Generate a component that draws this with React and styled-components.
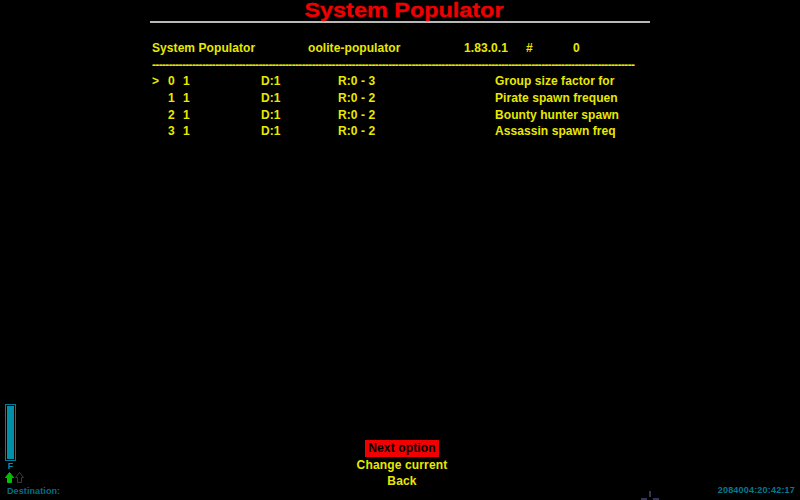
import React from "react";
import styled, { createGlobalStyle } from "styled-components";

const Global = createGlobalStyle`
  html, body { margin: 0; padding: 0; background: #000; }
  #root { width: 800px; height: 500px; }
`;

const Screen = styled.div`
  width: 800px;
  height: 500px;
  background: #000;
  overflow: hidden;
  display: flex;
  flex-direction: column;
  font-family: "Liberation Sans", Arial, sans-serif;
  font-weight: 700;
  color: #e8e800;
`;

const Panel = styled.main`
  width: 500px;
  margin-left: 150px;
  flex: 1;
`;

const Title = styled.h1`
  margin: 0;
  padding-left: 8px;
  height: 21px;
  line-height: 20px;
  font-size: 21px;
  font-weight: 700;
  -webkit-text-stroke: 0.3px #f00000;
  color: #f00000;
  text-align: center;
  transform: scaleX(1.115);
  transform-origin: 254px 0;
`;

const Rule = styled.div`
  height: 2px;
  background: #b8b8b8;
`;

const Table = styled.div`
  margin-top: 17px;
  padding-left: 2px;
  font-size: 12px;
  line-height: 16.7px;
  letter-spacing: 0.07px;
`;

const HeaderRow = styled.div`
  display: grid;
  grid-template-columns: 156px 156px 62px 47px 1fr;
`;

const Divider = styled.div`
  height: 17px;
  white-space: nowrap;
  letter-spacing: -0.67px;
`;

const Rows = styled.div`
  margin-top: -0.5px;
`;

const Row = styled.div`
  display: grid;
  grid-template-columns: 16px 15px 78px 77px 157px 1fr;
  white-space: nowrap;
`;

const Footer = styled.footer`
  height: 96px;
  display: grid;
  grid-template-columns: 150px 500px 150px;
`;

const LeftHud = styled.div`
  display: flex;
  flex-direction: column;
  padding-left: 5px;
`;

const FuelFrame = styled.div`
  width: 7px;
  height: 53px;
  border: 1px solid #007f94;
  padding: 1px;
  display: flex;
`;

const FuelFill = styled.div`
  flex: 1;
  background: #0090a8;
`;

const FuelLabel = styled.div`
  width: 11px;
  height: 11px;
  font-size: 9px;
  line-height: 11px;
  text-align: center;
  color: #0090a8;
`;

const Arrows = styled.div`
  display: flex;
  gap: 1px;
  height: 12px;
`;

const Caption = styled.div`
  font-size: 9px;
  line-height: 10px;
  margin-top: 2px;
  padding-left: 2px;
  letter-spacing: 0.1px;
  color: #006f88;
  white-space: nowrap;
`;

const Menu = styled.nav`
  display: flex;
  flex-direction: column;
  align-items: center;
  padding-top: 36px;
  padding-left: 4px;
  font-size: 12px;
  line-height: 16.7px;
  letter-spacing: 0.15px;
`;

const MenuItem = styled.div`
  padding: 0 3px;
  height: 16.7px;
  background: ${(p) => (p.$active ? "#f00000" : "transparent")};
  color: ${(p) => (p.$active ? "#000" : "inherit")};
`;

const RightHud = styled.div`
  display: flex;
  align-items: flex-end;
  justify-content: space-between;
`;

const Reticle = styled.svg`
  display: block;
  margin-left: -10px;
`;

const Clock = styled.div`
  font-size: 9px;
  line-height: 10px;
  margin-bottom: 5px;
  margin-right: 5px;
  letter-spacing: 0.2px;
  color: #007c94;
`;

const header = ["System Populator", "oolite-populator", "1.83.0.1", "#", "0"];
const rows = [
  [">", "0", "Group size factor for", "3"],
  ["", "1", "Pirate spawn frequen", "2"],
  ["", "2", "Bounty hunter spawn", "2"],
  ["", "3", "Assassin spawn freq", "2"],
];

const UpArrow = ({ fill, stroke }) => (
  <svg width="9" height="12" viewBox="0 0 9 12">
    <path d="M4.5 .5 L8.5 5.5 H6.5 V10.5 H2.5 V5.5 H.5 Z" fill={fill} stroke={stroke} strokeWidth="1" />
  </svg>
);

export default function App() {
  return (
    <Screen>
      <Global />
      <Panel>
        <Title>System Populator</Title>
        <Rule />
        <Table>
          <HeaderRow>
            {header.map((h) => (
              <span key={h}>{h}</span>
            ))}
          </HeaderRow>
          <Divider>{"-".repeat(145)}</Divider>
          <Rows>
            {rows.map(([mark, n, desc, max]) => (
              <Row key={n}>
                <span>{mark}</span>
                <span>{n}</span>
                <span>1</span>
                <span>D:1</span>
                <span>R:0 - {max}</span>
                <span>{desc}</span>
              </Row>
            ))}
          </Rows>
        </Table>
      </Panel>
      <Footer>
        <LeftHud>
          <FuelFrame>
            <FuelFill />
          </FuelFrame>
          <FuelLabel>F</FuelLabel>
          <Arrows>
            <UpArrow fill="#00c000" stroke="#00c000" />
            <UpArrow fill="none" stroke="#3a3a3a" />
          </Arrows>
          <Caption>Destination:</Caption>
        </LeftHud>
        <Menu>
          <MenuItem $active>Next option</MenuItem>
          <MenuItem>Change current</MenuItem>
          <MenuItem>Back</MenuItem>
        </Menu>
        <RightHud>
          <Reticle width="20" height="12" viewBox="0 0 20 12">
            <path d="M10 3 V9 M1 11 H7 M13 11 H19" stroke="#6a66b0" strokeWidth="1" fill="none" />
          </Reticle>
          <Clock>2084004:20:42:17</Clock>
        </RightHud>
      </Footer>
    </Screen>
  );
}
